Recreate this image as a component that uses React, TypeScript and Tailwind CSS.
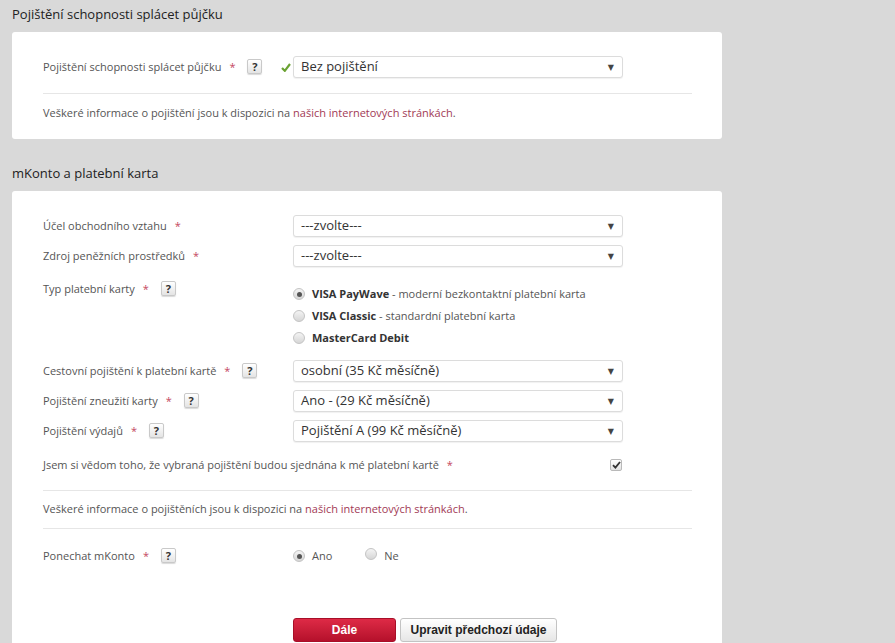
import React from "react";

const font = { fontFamily: '"Open Sans", "DejaVu Sans", sans-serif' };

function Help() {
  return (
    <span className="inline-flex h-[15px] w-[15px] items-center justify-center rounded-[2px] border border-[#c9c9c9] bg-gradient-to-b from-white to-[#e4e4e4] text-[11px] font-bold leading-none text-[#333] shadow-[0_1px_1px_rgba(0,0,0,0.15)]">
      ?
    </span>
  );
}

function Req() {
  return <span className="text-[#c4475f]">*</span>;
}

function Select({ value }: { value: string }) {
  return (
    <div className="flex h-[22px] w-[330px] shrink-0 items-center justify-between rounded-[3px] border border-[#dcdcdc] bg-white pl-[7px] pr-[8px] text-[13px] text-[#333] shadow-[0_1px_1px_rgba(0,0,0,0.06)]">
      <span>{value}</span>
      <span className="text-[8px] text-[#444]">▼</span>
    </div>
  );
}

function Radio({ checked }: { checked?: boolean }) {
  return (
    <span className="inline-flex h-[12px] w-[12px] shrink-0 items-center justify-center rounded-full border border-[#c4c4c4] bg-gradient-to-b from-[#f4f4f4] to-[#d6d6d6]">
      {checked && <span className="h-[5px] w-[5px] rounded-full bg-[#555]" />}
    </span>
  );
}

function Label({ text, help }: { text: string; help?: boolean }) {
  return (
    <div className="flex h-[22px] w-[250px] shrink-0 items-center gap-[8px] whitespace-nowrap text-[11px] text-[#555]">
      <span>{text}</span>
      <Req />
      {help && (
        <span className="ml-[4px]">
          <Help />
        </span>
      )}
    </div>
  );
}

function SelectRow({ label, value, help }: { label: string; value: string; help?: boolean }) {
  return (
    <div className="flex items-center">
      <Label text={label} help={help} />
      <Select value={value} />
    </div>
  );
}

function Info({ plural }: { plural?: boolean }) {
  return (
    <p className="text-[11px] text-[#555]">
      Veškeré informace o {plural ? "pojištěních" : "pojištění"} jsou k dispozici na{" "}
      <a className="text-[#a23a55]">našich internetových stránkách</a>.
    </p>
  );
}

export default function App() {
  return (
    <div className="min-h-[643px] bg-[#d9d9d9] pt-[4px] pl-[12px]" style={font}>
      <h2 className="h-[20px] text-[13px] leading-[20px] text-[#222]">Pojištění schopnosti splácet půjčku</h2>
      <div className="mt-[8px] w-[710px] rounded-[3px] bg-white pt-[24px] pr-[30px] pb-[17px] pl-[31px]">
        <div className="flex items-center">
          <div className="flex h-[22px] w-[250px] shrink-0 items-center whitespace-nowrap text-[11px] text-[#555]">
            <span>Pojištění schopnosti splácet půjčku</span>
            <span className="ml-[8px]">
              <Req />
            </span>
            <span className="ml-[12px]">
              <Help />
            </span>
            <svg className="ml-auto mr-[2px]" width="10" height="9" viewBox="0 0 10 9">
              <path d="M1 5 L3.8 7.8 L9 1" fill="none" stroke="#6aa232" strokeWidth="2.2" />
            </svg>
          </div>
          <Select value="Bez pojištění" />
        </div>
        <div className="mt-[15px] border-t border-[#e6e6e6]" />
        <div className="mt-[10px] h-[18px] leading-[18px]">
          <Info />
        </div>
      </div>

      <h2 className="mt-[24px] h-[20px] text-[13px] leading-[20px] text-[#222]">mKonto a platební karta</h2>
      <div className="mt-[8px] w-[710px] rounded-t-[3px] bg-white pt-[24px] pr-[30px] pb-[40px] pl-[31px]">
        <div className="flex flex-col gap-[8px]">
          <SelectRow label="Účel obchodního vztahu" value="---zvolte---" />
          <SelectRow label="Zdroj peněžních prostředků" value="---zvolte---" />
        </div>

        <div className="mt-[11px] flex items-start">
          <Label text="Typ platební karty" help />
          <div className="flex flex-col pt-[5px] text-[11px] text-[#555]">
            {[
              { b: "VISA PayWave", t: " - moderní bezkontaktní platební karta", c: true },
              { b: "VISA Classic", t: " - standardní platební karta" },
              { b: "MasterCard Debit", t: "" },
            ].map((r) => (
              <div key={r.b} className="flex h-[22px] items-center gap-[7px]">
                <Radio checked={r.c} />
                <span>
                  <b className="font-bold text-[#333]">{r.b}</b>
                  {r.t}
                </span>
              </div>
            ))}
          </div>
        </div>

        <div className="mt-[11px] flex flex-col gap-[8px]">
          <SelectRow label="Cestovní pojištění k platební kartě" value="osobní (35 Kč měsíčně)" help />
          <SelectRow label="Pojištění zneužití karty" value="Ano - (29 Kč měsíčně)" help />
          <SelectRow label="Pojištění výdajů" value="Pojištění A (99 Kč měsíčně)" help />
        </div>

        <div className="mt-[12px] flex h-[22px] w-[579px] items-center justify-between text-[11px] text-[#555]">
          <span>
            Jsem si vědom toho, že vybraná pojištění budou sjednána k mé platební kartě{" "}
            <span className="ml-[5px]">
              <Req />
            </span>
          </span>
          <span className="flex h-[12px] w-[12px] items-center justify-center rounded-[2px] border border-[#b9b9b9] bg-gradient-to-b from-white to-[#e2e2e2]">
            <svg width="9" height="8" viewBox="0 0 9 8">
              <path d="M1 4.2 L3.4 6.6 L8 1" fill="none" stroke="#333" strokeWidth="1.8" />
            </svg>
          </span>
        </div>

        <div className="mt-[14px] border-t border-[#e6e6e6]" />
        <div className="flex h-[37px] items-center">
          <Info plural />
        </div>
        <div className="border-t border-[#e6e6e6]" />

        <div className="mt-[16px] flex items-center">
          <Label text="Ponechat mKonto" help />
          <div className="flex items-center text-[11px] text-[#555]">
            <Radio checked />
            <span className="ml-[7px]">Ano</span>
            <span className="ml-[33px]">
              <Radio />
            </span>
            <span className="ml-[7px]">Ne</span>
          </div>
        </div>

        <div className="mt-[51px] flex gap-[4px] pl-[250px]" style={{ fontFamily: '"Liberation Sans", Arial, sans-serif' }}>
          <button className="h-[24px] w-[103px] rounded-[3px] border border-[#a80f28] bg-gradient-to-b from-[#de2a46] to-[#b5102b] text-[12px] font-bold text-white">
            Dále
          </button>
          <button className="h-[24px] w-[157px] rounded-[3px] border border-[#c3c3c3] bg-gradient-to-b from-white to-[#e6e6e6] text-[12px] font-bold text-[#222]">
            Upravit předchozí údaje
          </button>
        </div>
      </div>
    </div>
  );
}
